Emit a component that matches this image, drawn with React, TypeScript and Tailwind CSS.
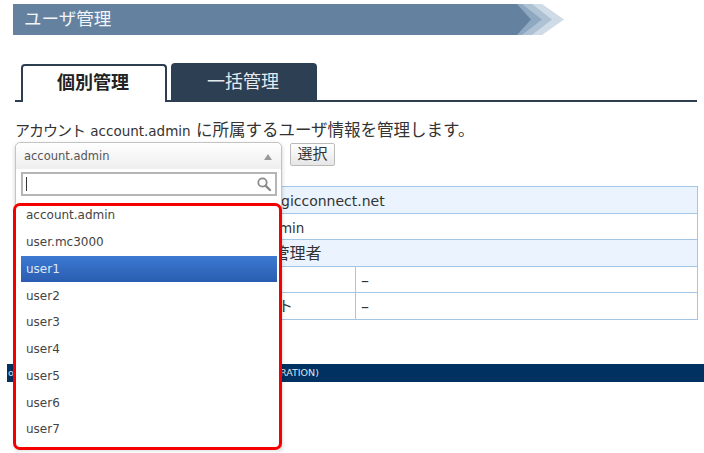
import React from 'react';

const FONT = "font-['DejaVu_Sans','Noto_Sans_CJK_JP',sans-serif]";
const users = ['account.admin', 'user.mc3000', 'user1', 'user2', 'user3', 'user4', 'user5', 'user6', 'user7'];

function SearchIcon() {
  return (
    <svg width="16" height="16" viewBox="0 0 16 16" fill="none">
      <circle cx="6.5" cy="6.5" r="4.2" stroke="#8a8a8a" strokeWidth="1.8" />
      <path d="M9.8 9.8 L14 14" stroke="#8a8a8a" strokeWidth="2.4" strokeLinecap="round" />
    </svg>
  );
}

function Dropdown() {
  return (
    <div className="absolute left-[15px] top-[142px] w-[267px] h-[306px] bg-white border border-[#c4c4c4] rounded-t-[5px] shadow-[0_2px_4px_rgba(0,0,0,0.2)]">
      {/* 選択中 */}
      <div className="h-[26px] flex items-center justify-between pt-[2px] pl-2 pr-[9px] bg-gradient-to-b from-white to-[#eeeeee] rounded-t-[5px] text-[11.5px] text-[#555555]">
        <span>account.admin</span>
        <span className="w-0 h-0 border-x-[4px] border-x-transparent border-b-[6px] border-b-[#999999]" />
      </div>
      {/* 検索 */}
      <div className="ml-[5px] mr-[4px] mt-[3px] h-[24px] border-2 border-[#b5b5b5] flex items-center justify-between px-[3px] bg-white">
        <span className="w-px h-[14px] bg-[#333333]" />
        <SearchIcon />
      </div>
      {/* リスト */}
      <ul className="ml-[5px] mr-[4px] mt-[6px]">
        {users.map((u) => (
          <li
            key={u}
            className={`h-[26.75px] flex items-center px-[5px] text-[12px] ${
              u === 'user1'
                ? 'bg-gradient-to-b from-[#3d79d3] to-[#2a5db0] text-[#dfe9f7]'
                : 'text-[#444444]'
            }`}
          >
            {u}
          </li>
        ))}
      </ul>
    </div>
  );
}

function InfoRow({ odd, children, label, split }: { odd?: boolean; children: React.ReactNode; label?: string; split?: boolean }) {
  return (
    <div className={`h-[26.6px] flex items-center border-b border-[#a3c6e6] text-[13.5px] text-[#333333] ${odd ? 'bg-[#eaf3fe]' : 'bg-white'}`}>
      {split ? (
        <>
          <div className="w-[340px] h-full flex items-center justify-end pr-[62px] border-r border-[#a3c6e6] text-[15px]">{label}</div>
          <div className="pl-[5px] pt-[2px] text-[16px]">{children}</div>
        </>
      ) : (
        <div className="pl-[191px] pt-[3px] whitespace-nowrap">{children}</div>
      )}
    </div>
  );
}

export default function App() {
  return (
    <div className={`relative w-[704px] h-[453px] overflow-hidden bg-white ${FONT}`}>
      {/* タイトル */}
      <div className="pt-1 pl-[13px]">
        <div className="relative w-[551px] h-[31px]">
          <svg className="absolute inset-0" width="551" height="31" viewBox="0 0 551 31">
            <path d="M510 0 H529 L551 15.5 L529 31 H510 Z" fill="#cfdbe6" />
            <path d="M500 0 H519 L539 15.5 L519 31 H500 Z" fill="#afc2d4" />
            <path d="M490 0 H509 L529 15.5 L509 31 H490 Z" fill="#8fa8c1" />
            <path d="M0 0 H504 L518 15.5 L504 31 H0 Z" fill="#64829f" />
          </svg>
          <div className="relative h-full flex items-center pl-[11px] text-[17.5px] text-[#f2f5f8]">ユーザ管理</div>
        </div>
      </div>

      {/* タブ */}
      <div className="ml-[15px] mt-[29px] w-[682px] h-[38px] flex items-end border-b-2 border-[#2c3e50] pl-[6px]">
        <div className="w-[146px] h-[38px] -mb-[2px] pb-1 pr-[2px] bg-white border-2 border-b-0 border-[#2c3e50] rounded-t-[4px] flex items-center justify-center text-[18px] font-bold text-[#222222]">
          個別管理
        </div>
        <div className="w-[146px] h-[37px] ml-[4px] pr-[2px] bg-[#2d3f52] rounded-t-[4px] flex items-center justify-center text-[18px] text-[#e6eaee]">
          一括管理
        </div>
      </div>

      {/* 説明 */}
      <p className="ml-[15px] mt-[19px] h-[20px] leading-[20px] text-[16.5px] text-[#333333] whitespace-nowrap">
        <span className="text-[15px] tracking-[-1px]">アカウント</span> <span className="text-[13.5px]">account.admin</span> に所属するユーザ情報を管理します。
      </p>

      {/* 選択ボタン */}
      <div className="ml-[290px] mt-[2px] w-[45px] h-[23px] border border-[#bbbbbb] rounded-[2px] bg-gradient-to-b from-white to-[#e6e6e6] flex items-center justify-center text-[15px] text-[#333333]">
        選択
      </div>

      {/* 情報テーブル */}
      <div className="ml-[15px] mt-[20px] w-[683px] border border-b-0 border-[#a3c6e6]">
        <InfoRow odd><span className="-ml-[15px] text-[14px]">admin1@magicconnect.net</span></InfoRow>
        <InfoRow><span className="-ml-[3px]">account.admin</span></InfoRow>
        <InfoRow odd><span className="text-[16px] pl-[3px]">システム管理者</span></InfoRow>
        <InfoRow split>–</InfoRow>
        <InfoRow split label="パスワードリセット">–</InfoRow>
      </div>

      {/* フッター */}
      <div className="ml-[7px] mt-[44px] h-[18px] flex items-center pl-px bg-[#003161] text-[9.5px] text-[#dce4ee] whitespace-nowrap">
        <span className="w-[272px] overflow-hidden">o</span>
        <span>RATION)</span>
      </div>

      <Dropdown />

      {/* 赤枠 */}
      <div className="absolute left-[13px] top-[203px] w-[269px] h-[247px] border-[3px] border-[#f40000] rounded-[7px]" />
    </div>
  );
}
